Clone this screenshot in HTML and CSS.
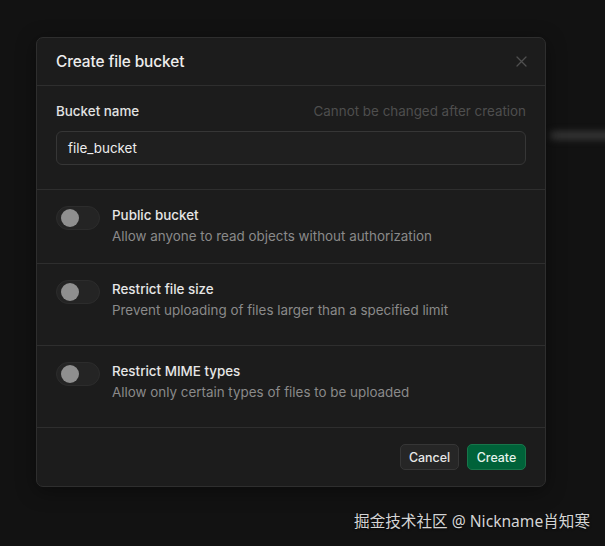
FILE: index.html
```html
<!DOCTYPE html>
<html lang="en">
<head>
<meta charset="utf-8">
<title>Create file bucket</title>
<link rel="stylesheet" href="styles.css">
</head>
<body>
<div class="backdrop-blur" aria-hidden="true"></div>
<div class="dialog">
  <div class="dialog-header">
    <h2 class="dialog-title">Create file bucket</h2>
    <svg class="close" width="11" height="11" viewBox="0 0 11 11" aria-hidden="true"><path d="M1 1L10 10M10 1L1 10" stroke="currentColor" stroke-width="1.3" stroke-linecap="round"/></svg>
  </div>
  <div class="section">
    <div class="label-row">
      <span class="label">Bucket name</span>
      <span class="hint">Cannot be changed after creation</span>
    </div>
    <div class="input">file_bucket</div>
  </div>
  <div class="option">
    <span class="toggle"><span class="knob"></span></span>
    <div class="option-text">
      <div class="option-title">Public bucket</div>
      <div class="option-desc">Allow anyone to read objects without authorization</div>
    </div>
  </div>
  <div class="option option--tall">
    <span class="toggle"><span class="knob"></span></span>
    <div class="option-text">
      <div class="option-title">Restrict file size</div>
      <div class="option-desc">Prevent uploading of files larger than a specified limit</div>
    </div>
  </div>
  <div class="option option--tall">
    <span class="toggle"><span class="knob"></span></span>
    <div class="option-text">
      <div class="option-title">Restrict MIME types</div>
      <div class="option-desc">Allow only certain types of files to be uploaded</div>
    </div>
  </div>
  <div class="footer">
    <button class="btn btn-cancel">Cancel</button>
    <button class="btn btn-create">Create</button>
  </div>
</div>
<div class="watermark">掘金技术社区 @ Nickname肖知寒</div>
</body>
</html>
```
FILE: styles.css
```css
* { box-sizing: border-box; }
html, body { margin: 0; padding: 0; }
body {
  background: #121212;
  font-family: Inter, "Noto Sans", "Noto Sans CJK SC", sans-serif;
  color: #ededed;
  width: 605px;
  height: 546px;
  overflow: hidden;
  position: relative;
  padding-top: 37px;
}
.backdrop-blur {
  position: absolute;
  left: 550px;
  top: 131px;
  width: 70px;
  height: 9px;
  border-radius: 4px;
  background: #333;
  filter: blur(3px);
}
.dialog {
  position: relative;
  margin-left: 36px;
  width: 510px;
  background: #1c1c1c;
  border: 1px solid #2e2e2e;
  border-radius: 7px;
  box-shadow: 0 4px 20px rgba(0,0,0,0.4);
}
.dialog-header {
  height: 48px;
  padding: 0 19px;
  border-bottom: 1px solid #2e2e2e;
  display: flex;
  align-items: center;
  justify-content: space-between;
}
.dialog-title {
  margin: 0;
  font-size: 15.4px;
  font-weight: 500;
  color: #ededed;
  letter-spacing: -0.1px;
}
.close { color: #4f4f4f; margin-right: -1px; margin-top: 0; }
.section {
  padding: 15px 19px 24px;
  border-bottom: 1px solid #2e2e2e;
}
.label-row {
  display: flex;
  justify-content: space-between;
  align-items: center;
  height: 20px;
  font-size: 13.4px;
}
.label { color: #e2e2e2; font-weight: 500; }
.hint { color: #4e4e4e; }
.input {
  margin-top: 10px;
  height: 34px;
  border: 1px solid #363636;
  border-radius: 6px;
  background: #1f1f1f;
  padding: 0 11px;
  display: flex;
  align-items: center;
  font-size: 13.4px;
  color: #ededed;
}
.option {
  display: flex;
  align-items: flex-start;
  gap: 12px;
  padding: 15px 19px 16px;
  border-bottom: 1px solid #2e2e2e;
}
.option--tall { padding-bottom: 24px; }
.toggle {
  flex: none;
  width: 44px;
  height: 24px;
  margin-top: 1px;
  border-radius: 12px;
  background: #242424;
  border: 1px solid #2c2c2c;
  display: flex;
  align-items: center;
  padding-left: 4px;
}
.knob {
  width: 18px;
  height: 18px;
  border-radius: 50%;
  background: #8f8f8f;
}
.option-text { font-size: 13.4px; line-height: 21px; }
.option-title { font-weight: 500; color: #e6e6e6; }
.option-desc { color: #8a8a8a; }
.footer {
  display: flex;
  justify-content: flex-end;
  gap: 8px;
  padding: 16px 19px 16px;
}
.btn {
  height: 26px;
  width: 59px;
  border-radius: 5px;
  font-family: inherit;
  font-size: 12.4px;
  font-weight: 500;
  padding: 0;
  cursor: pointer;
}
.btn-cancel {
  background: #262626;
  border: 1px solid #363636;
  color: #e8e8e8;
}
.btn-create {
  background: #006239;
  border: 1px solid #18754a;
  color: #e6f3ec;
}
.watermark {
  margin-top: 23px;
  padding-right: 15px;
  text-align: right;
  font-family: "Noto Sans", "Noto Sans CJK SC", sans-serif;
  font-size: 15.6px;
  line-height: 22px;
  color: #d4d4d4;
  text-shadow: 0 1px 2px rgba(0,0,0,0.6);
}
```
